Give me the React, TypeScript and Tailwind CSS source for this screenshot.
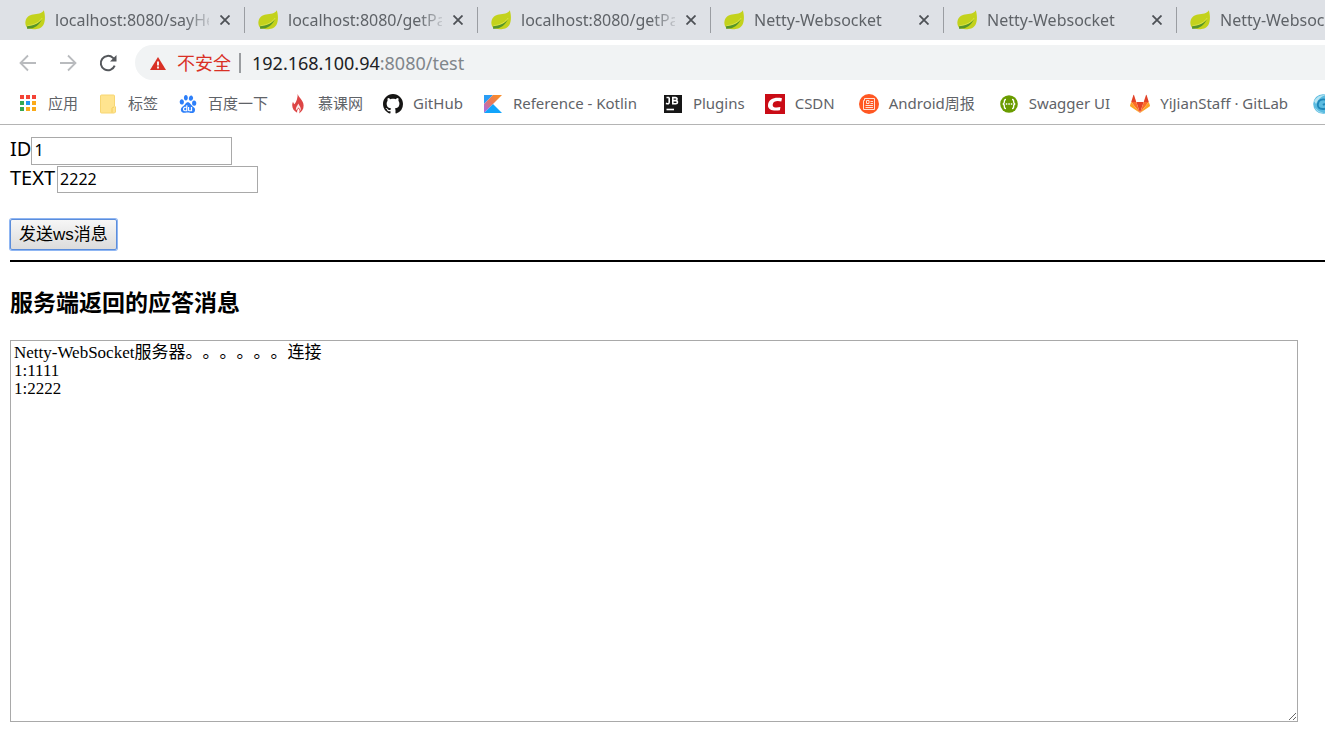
import type { ReactNode } from "react";
import { SiBaidu } from "react-icons/si";

function LeafIcon() {
    return (
        <svg viewBox="0 0 20 20" className="h-5 w-5 shrink-0">
            <path
                d="M18.800.2c1.500 4.300 1.700 11.300-.6 15.100-2.300 3.500-6.200 4-9.700 3.900-2.500-.1-4.500-.5-6-1.200C.8 16.800 0 14 .5 11.200 1.200 7.300 4.300 5.200 8 4.600c4.500-.8 9-1 10.800-4.400Z"
                fill="#c3d21c"
            />
            <path
                d="M17.200 8.500C15.200 12.300 10.800 15.300 2.200 15.900l-.2 2.800c6.500.5 12.200-2.700 15.200-10.200Z"
                fill="#55952a"
            />
            <path d="M2.500 15.700C10 15 14.500 12 17.200 8" stroke="#e6ea5c" strokeWidth="0.7" fill="none" />
        </svg>
    );
}

function AppsIcon() {
    const colors = ["#f44336", "#f44336", "#f44336", "#34a853", "#2196f3", "#fbaa19", "#34a853", "#fbaa19", "#fbaa19"];
    return (
        <svg viewBox="0 0 20 20" className="h-5 w-5">
            {colors.map((c, i) => (
                <rect key={i} x={2 + (i % 3) * 6} y={1 + Math.floor(i / 3) * 6} width="4" height="4" fill={c} />
            ))}
        </svg>
    );
}

function FolderIcon() {
    return (
        <svg viewBox="0 0 20 20" className="h-5 w-5">
            <path d="M2.500 2q0-1 1-1h12q1 0 1 1v10l1 1v5l-1 1h-13q-1 0-1-1Z" fill="#ffe48f" stroke="#f7d672" />
            <path d="M14 18.500v-4q0-1 2-1.500" stroke="#f3cc5b" fill="none" />
        </svg>
    );
}

function FlameIcon() {
    return (
        <svg viewBox="0 0 20 20" className="h-5 w-5">
            <path
                d="M9.700 0c.8 3.200 5.800 6.200 5.900 11.500.1 3.900-2 6.100-4.600 8 1-2 .8-3.400-.5-5-1 .9-1.500 2.400-1.400 4.200C6.200 17 4.200 14.800 4.200 11c0-1 .3-2.200.8-3.300.4 1.200.8 2 1.500 2.500C8.700 7.500 9.700 3.500 9.700 0Z"
                fill="#dd4545"
            />
            <path d="M10.300 9.500c-.6 2.300-2.800 3.600-2.300 6.800 1-.8 1.800-1.700 2.500-2.700 1 1.200 1.700 2 1.800 3.600 1.500-3.200-.7-5-2-7.700Z" fill="#fbe9e9" />
        </svg>
    );
}

function GitHubIcon() {
    return (
        <svg viewBox="0 0 16 16" className="h-5 w-5">
            <path
                d="M8 0C3.58 0 0 3.58 0 8c0 3.54 2.29 6.53 5.47 7.59.4.07.55-.17.55-.38 0-.19-.01-.82-.01-1.49-2.01.37-2.53-.49-2.69-.94-.09-.23-.48-.94-.82-1.13-.28-.15-.68-.52-.01-.53.63-.01 1.08.58 1.23.82.72 1.21 1.87.87 2.33.66.07-.52.28-.87.51-1.07-1.78-.2-3.64-.89-3.64-3.95 0-.87.31-1.59.82-2.15-.08-.2-.36-1.02.08-2.12 0 0 .67-.21 2.2.82.64-.18 1.32-.27 2-.27s1.36.09 2 .27c1.53-1.04 2.2-.82 2.2-.82.44 1.1.16 1.92.08 2.12.51.56.82 1.27.82 2.15 0 3.07-1.87 3.75-3.65 3.95.29.25.54.73.54 1.48 0 1.07-.01 1.93-.01 2.2 0 .21.15.46.55.38A8.01 8.01 0 0 0 16 8c0-4.42-3.58-8-8-8Z"
                fill="#161514"
            />
        </svg>
    );
}

function KotlinIcon() {
    return (
        <svg viewBox="0 0 20 20" className="h-5 w-5">
            <defs>
                <linearGradient id="kt" x1="0" y1="1" x2="1" y2="0">
                    <stop offset="0.15" stopColor="#b06cd4" />
                    <stop offset="0.5" stopColor="#e8785a" />
                    <stop offset="0.85" stopColor="#f98c2b" />
                </linearGradient>
            </defs>
            <path d="M1 1h9L1 10Z" fill="#2a9df4" />
            <path d="M10 1h9L1 19v-9Z" fill="url(#kt)" />
            <path d="M1 19l9-9 9 9Z" fill="#12a4fb" />
        </svg>
    );
}

function JetBrainsIcon() {
    return (
        <svg viewBox="0 0 20 20" className="h-5 w-5">
            <rect x="1" y="1" width="18" height="18" fill="#161616" />
            <path d="M3 9.200q3.200 1.600 3.200-1.200V3.500M3.500 3.500h2.700" stroke="#fff" strokeWidth="1.600" fill="none" />
            <path
                d="M9.800 9.800V3.600h2.600c2.300 0 2.200 3 0 3h-2.600 2.900c2.400 0 2.300 3.200 0 3.200Z"
                stroke="#fff"
                strokeWidth="1.600"
                fill="none"
            />
            <path d="M3.500 15.500h7.500" stroke="#fff" strokeWidth="1.600" />
        </svg>
    );
}

function CsdnIcon() {
    return (
        <svg viewBox="0 0 20 20" className="h-5 w-5">
            <path d="M0 0h20v20H0Z" fill="#ca0c16" />
            <path
                d="M17 4.300l-.7 3.200c-3.700-1-8-.7-8.600 2.900-.5 3.300 3.500 3.600 7.700 2.700l-.5 3.100C8.500 17.300 2.600 16 3 10.900 3.500 4.800 10 2.800 17 4.300Z"
                fill="#fff"
            />
        </svg>
    );
}

function WeeklyIcon() {
    return (
        <svg viewBox="0 0 20 20" className="h-5 w-5">
            <circle cx="10" cy="10" r="10" fill="#ff5722" />
            <g stroke="#ffe1d6" fill="none">
                <path d="M5.500 4.500h10v11H4.500v-9h1Z" />
                <path d="M7.500 6.500h2.500v3H7.500ZM11.500 7.500h2.500M11.500 9.500h2.500M6.500 11.500h7.500M6.500 13.500h7.500" />
            </g>
        </svg>
    );
}

function SwaggerIcon() {
    return (
        <svg viewBox="0 0 20 20" className="h-5 w-5">
            <circle cx="10" cy="10" r="8.800" fill="#6a9c00" />
            <path
                d="M7 5.500q-1.800 0-1.600 1.800 0 2.500-1.600 2.700 1.600.2 1.600 2.700-.2 1.800 1.600 1.800M13 5.500q1.800 0 1.600 1.800 0 2.500 1.600 2.700-1.600.2-1.600 2.700.2 1.800-1.600 1.800"
                stroke="#fff"
                strokeWidth="1.300"
                fill="none"
            />
            <path d="M6.800 9.300h1.500v1.500H6.800ZM9.300 9.300h1.500v1.500H9.300ZM11.800 9.300h1.500v1.500h-1.500Z" fill="#fff" />
        </svg>
    );
}

function GitLabIcon() {
    return (
        <svg viewBox="0 0 20 20" className="h-5 w-5">
            <path d="M10 19l3.700-11H6.300Z" fill="#e24329" />
            <path d="M10 19L6.300 8H1.200ZM10 19l3.700-11h5.100Z" fill="#fc6d26" />
            <path d="M1.200 8L0 11.500q0 .6.400.9L10 19ZM18.800 8l1.200 3.500q0 .6-.4.9L10 19Z" fill="#fca326" />
            <path d="M1.200 8h5.100L4 1q-.3-.6-.6 0ZM18.800 8h-5.100L16 1q.3-.6.6 0Z" fill="#e24329" />
        </svg>
    );
}

function SwirlIcon() {
    return (
        <svg viewBox="0 0 20 20" className="h-5 w-5">
            <circle cx="10" cy="10" r="9.800" fill="#5bbbe0" />
            <path d="M1 7Q5 0 13 1 6 3 3 10Z" fill="#b5e4f2" />
            <path d="M1.500 13q4 5 9 5.500-6 1.500-9-5.500Z" fill="#a5def0" />
            <path d="M14 6Q6 4 5 9.500T10 15q4 0 3-3t-3-1" stroke="#1e86b8" strokeWidth="1.800" fill="none" />
        </svg>
    );
}

const tabs = [
    "localhost:8080/sayHello",
    "localhost:8080/getParam",
    "localhost:8080/getParam",
    "Netty-Websocket",
    "Netty-Websocket",
    "Netty-Websocket",
];

const bookmarks: { label: string; icon: ReactNode; width?: string }[] = [
    { label: "应用", icon: <AppsIcon /> },
    { label: "标签", icon: <FolderIcon /> },
    { label: "百度一下", icon: <SiBaidu className="h-[18px] w-5 text-[#2d7ff9]" /> },
    { label: "慕课网", icon: <FlameIcon /> },
    { label: "GitHub", icon: <GitHubIcon /> },
    { label: "Reference - Kotlin", icon: <KotlinIcon />, width: "min-w-[130px]" },
    { label: "Plugins", icon: <JetBrainsIcon /> },
    { label: "CSDN", icon: <CsdnIcon />, width: "min-w-11" },
    { label: "Android周报", icon: <WeeklyIcon />, width: "min-w-[90px]" },
    { label: "Swagger UI", icon: <SwaggerIcon /> },
    { label: "YiJianStaff · GitLab", icon: <GitLabIcon />, width: "min-w-[133px]" },
    { label: "", icon: <SwirlIcon /> },
];

const log = "Netty-WebSocket服务器。。。。。。连接\n1:1111\n1:2222";

function TabStrip() {
    return (
        <div className="flex h-10 items-center overflow-hidden bg-[#dee1e6] pl-3">
            {tabs.map((title, i) => (
                <div key={i} className="flex h-[26px] w-[233px] shrink-0 items-center border-r border-[#9a9da2] pl-[13px]">
                    <LeafIcon />
                    <span className="ml-[10px] w-[154px] overflow-hidden whitespace-nowrap text-base leading-6 text-[#5f6368] [mask-image:linear-gradient(to_right,black_130px,transparent_160px)]">
                        {title}
                    </span>
                    <button aria-label="Close tab" className="ml-[7px] p-1 text-[#4d5156]">
                        <svg viewBox="0 0 10 10" className="h-[10px] w-[10px]" stroke="currentColor" strokeWidth="1.800">
                            <path d="M.5.5l9 9M9.500.5l-9 9" />
                        </svg>
                    </button>
                </div>
            ))}
        </div>
    );
}

function Toolbar() {
    return (
        <div className="flex h-[45px] items-center pt-[5px] pb-[5px] pl-[18px]">
            <button aria-label="Back" className="mr-5 text-[#b9bbbe]">
                <svg viewBox="0 0 20 20" className="h-5 w-5" stroke="currentColor" strokeWidth="1.800" fill="none">
                    <path d="M18 10H3M10 2.500L2.500 10l7.500 7.500" />
                </svg>
            </button>
            <button aria-label="Forward" className="mr-5 text-[#b9bbbe]">
                <svg viewBox="0 0 20 20" className="h-5 w-5" stroke="currentColor" strokeWidth="1.800" fill="none">
                    <path d="M2 10h15M10 2.500l7.500 7.500-7.500 7.500" />
                </svg>
            </button>
            <button aria-label="Reload" className="mr-[17px] text-[#54575b]">
                <svg viewBox="0 0 20 20" className="h-5 w-5">
                    <path d="M16.700 12.700A7.200 7.200 0 1 1 15 4.900l1.500 1.500" stroke="currentColor" strokeWidth="2" fill="none" />
                    <path d="M18.500 2v6.500H12Z" fill="currentColor" />
                </svg>
            </button>
            <div className="flex h-[35px] flex-1 items-center rounded-l-full bg-[#f1f3f4] pl-[15px] text-lg">
                <svg viewBox="0 0 16 15" className="mt-[2px] h-[15px] w-4">
                    <path d="M8 1l8 13H0Z" fill="#d93025" />
                    <path d="M8 5.500v4M8 10.500v2" stroke="#fff" strokeWidth="1.800" />
                </svg>
                <span className="ml-[11px] text-[#d93025]">不安全</span>
                <span className="mx-2 h-5 w-[2px] bg-[#9a9da0]" />
                <span className="ml-[3px] text-[#202124]">
                    192.168.100.94<span className="text-[#80868b]">:8080/test</span>
                </span>
            </div>
        </div>
    );
}

function BookmarkBar() {
    return (
        <nav className="flex h-10 items-center gap-5 overflow-hidden border-b border-[#b4b4b4] pb-[2px] pl-[18px]">
            {bookmarks.map(({ label, icon, width }, i) => (
                <a
                    key={i}
                    href="#"
                    aria-label={label || "Bookmark"}
                    className="flex shrink-0 items-center gap-[10px] whitespace-nowrap text-[15px] text-[#5f6368]"
                >
                    {icon}
                    {label && <span className={width}>{label}</span>}
                </a>
            ))}
        </nav>
    );
}

export default function App() {
    return (
        <div className="min-h-screen overflow-hidden bg-white font-['Noto_Sans','Noto_Sans_CJK_SC',sans-serif]">
            <header>
                <TabStrip />
                <Toolbar />
                <BookmarkBar />
            </header>

            <main className="pt-3 pl-[10px] text-black">
                <form onSubmit={(e) => e.preventDefault()}>
                    <div className="flex items-start text-xl leading-6">
                        <label htmlFor="id">ID</label>
                        <input
                            id="id"
                            defaultValue="1"
                            className="h-7 w-[201px] border border-[#a9a9a9] px-[2px] pb-[2px] text-base"
                        />
                    </div>
                    <div className="mt-px flex items-start text-xl leading-6">
                        <label htmlFor="text" className="pr-[2px]">TEXT</label>
                        <input
                            id="text"
                            defaultValue="2222"
                            className="h-[27px] w-[201px] border border-[#a9a9a9] px-[2px] pb-[2px] text-base"
                        />
                    </div>
                    <button
                        type="submit"
                        className="mt-[26px] block h-[31px] rounded-xs border border-[#5b8ddb] bg-linear-to-b from-[#f6f6f6] to-[#dcdcdc] px-2 font-['Liberation_Sans','Noto_Sans_CJK_SC',sans-serif] text-[17px] leading-6 ring-1 ring-[#8fb6f3]"
                    >
                        发送ws消息
                    </button>
                </form>

                <hr className="mt-[10px] border-t-2 border-black" />

                <h3 className="mt-[22px] text-[23px] leading-9 font-bold">
                    <label htmlFor="log">服务端返回的应答消息</label>
                </h3>
                <div className="mt-5 pr-[27px]">
                    <textarea
                        id="log"
                        defaultValue={log}
                        className="block h-[382px] w-full resize border border-[#a9a9a9] px-[3px] py-[3px] font-['Liberation_Serif','Noto_Sans_CJK_SC',serif] text-[17px] leading-[18px] [text-spacing-trim:space-all]"
                    />
                </div>
            </main>
        </div>
    );
}
